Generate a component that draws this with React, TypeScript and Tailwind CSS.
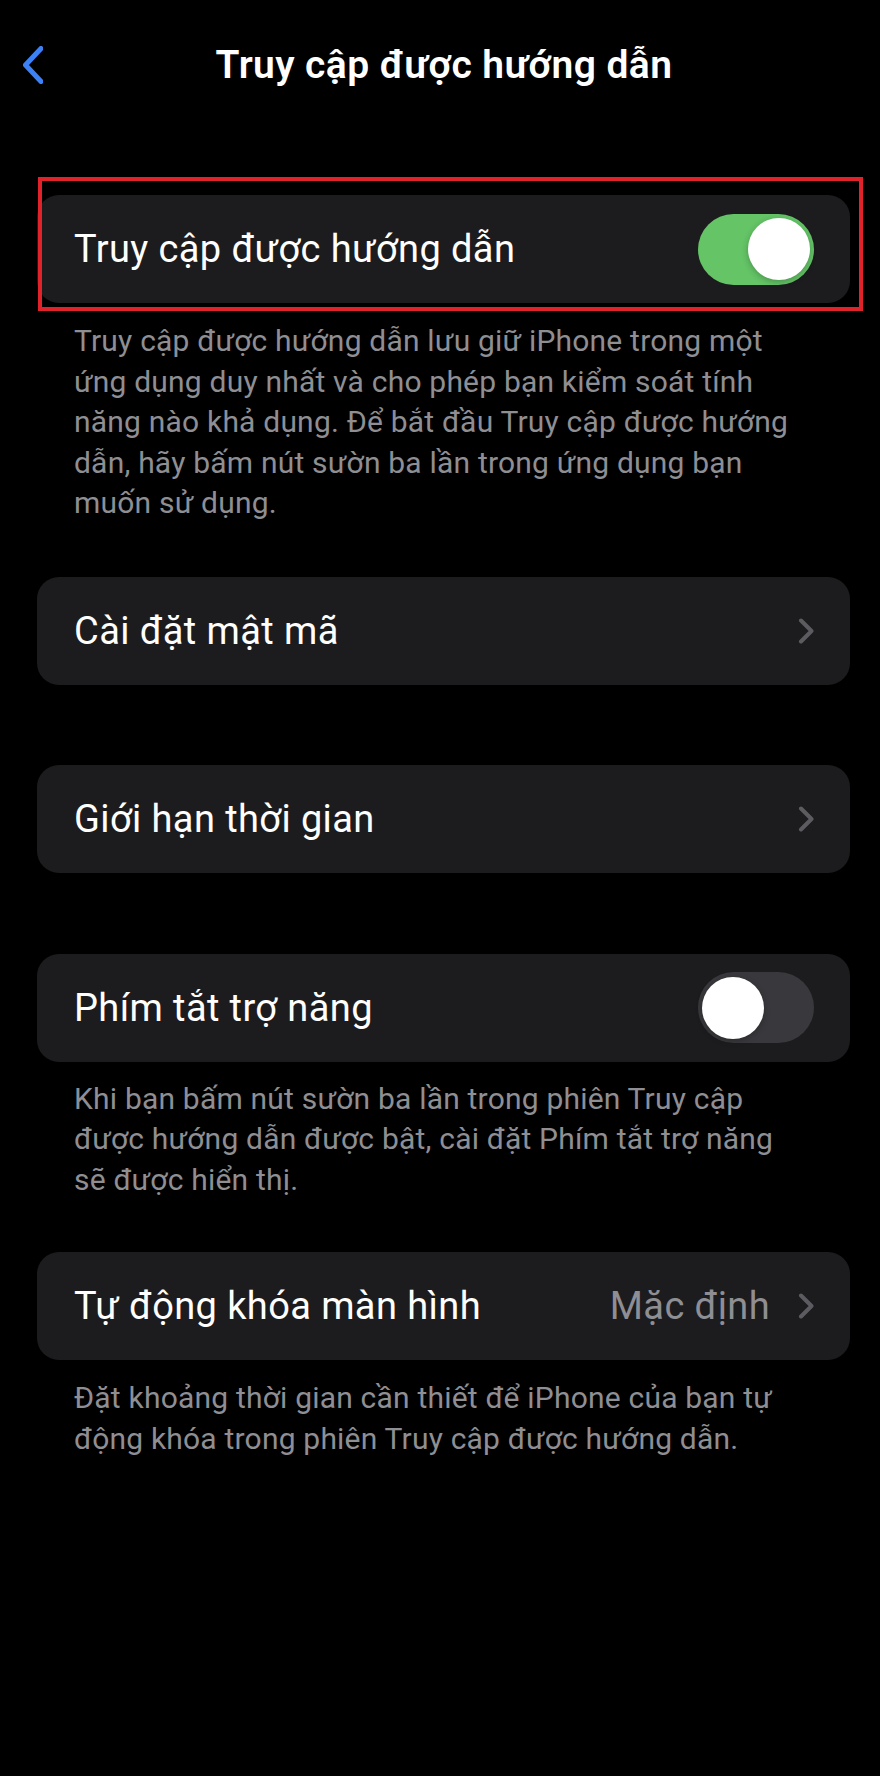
import type { ReactNode } from "react";

const font = { fontFamily: "Roboto, 'Noto Sans', sans-serif" };

function Chevron() {
    return (
        <svg width="16" height="26" viewBox="0 0 16 26" fill="none" className="shrink-0">
            <path d="M3 2.5L13.5 13L3 23.5" stroke="#5b5b60" strokeWidth="4" strokeLinecap="round" strokeLinejoin="round" />
        </svg>
    );
}

function Toggle({ on }: { on: boolean }) {
    return (
        <div
            className={`flex h-[71px] w-[116px] shrink-0 items-center rounded-full p-[4px] ${
                on ? "justify-end bg-[#64c466]" : "justify-start bg-[#39393d]"
            }`}
        >
            <div className="h-[62px] w-[62px] rounded-full bg-white shadow-[0_2px_6px_rgba(0,0,0,0.25)]" />
        </div>
    );
}

function Row({ label, right }: { label: string; right: ReactNode }) {
    return (
        <div className="flex h-[108px] items-center justify-between rounded-[22px] bg-[#1c1c1e] pl-[37px] pr-[36px]">
            <span className="text-[38px] leading-none tracking-[0.4px] text-white">{label}</span>
            {right}
        </div>
    );
}

function Note({ lines }: { lines: string[] }) {
    return (
        <p className="px-[37px] text-[30px] leading-[40.5px] tracking-[0.2px] text-[#8e8e93]">
            {lines.map((l) => (
                <span key={l} className="block whitespace-nowrap">
                    {l}
                </span>
            ))}
        </p>
    );
}

export default function App() {
    return (
        <div className="min-h-screen bg-black" style={font}>
            <header className="grid h-[130px] grid-cols-[1fr_auto_1fr] items-center">
                <div className="pl-[23px]">
                    <svg width="20" height="38" viewBox="0 0 20 38" fill="none">
                        <path d="M18 2.5L2.5 19L18 35.5" stroke="#3c82f6" strokeWidth="5" strokeLinecap="round" strokeLinejoin="round" />
                    </svg>
                </div>
                <h1 className="pl-[8px] text-[39px] font-semibold leading-none tracking-[0.4px] text-white">
                    Truy cập được hướng dẫn
                </h1>
                <div />
            </header>

            <main className="pl-[37px] pr-[30px]">
                <div className="relative mt-[65px]">
                    <Row label="Truy cập được hướng dẫn" right={<Toggle on />} />
                    <div className="pointer-events-none absolute -top-[18px] -right-[13px] -bottom-[8px] left-[1px] border-[4px] border-[#e0232b]" />
                </div>

                <div className="pt-[18px]">
                    <Note
                        lines={[
                            "Truy cập được hướng dẫn lưu giữ iPhone trong một",
                            "ứng dụng duy nhất và cho phép bạn kiểm soát tính",
                            "năng nào khả dụng. Để bắt đầu Truy cập được hướng",
                            "dẫn, hãy bấm nút sườn ba lần trong ứng dụng bạn",
                            "muốn sử dụng.",
                        ]}
                    />
                </div>

                <div className="mt-[53px]">
                    <Row label="Cài đặt mật mã" right={<Chevron />} />
                </div>

                <div className="mt-[80px]">
                    <Row label="Giới hạn thời gian" right={<Chevron />} />
                </div>

                <div className="mt-[81px]">
                    <Row label="Phím tắt trợ năng" right={<Toggle on={false} />} />
                </div>

                <div className="pt-[17px]">
                    <Note
                        lines={[
                            "Khi bạn bấm nút sườn ba lần trong phiên Truy cập",
                            "được hướng dẫn được bật, cài đặt Phím tắt trợ năng",
                            "sẽ được hiển thị.",
                        ]}
                    />
                </div>

                <div className="mt-[52px]">
                    <Row
                        label="Tự động khóa màn hình"
                        right={
                            <div className="flex items-center gap-[28px]">
                                <span className="text-[38px] leading-none tracking-[0.4px] text-[#8e8e93]">Mặc định</span>
                                <Chevron />
                            </div>
                        }
                    />
                </div>

                <div className="pt-[18px]">
                    <Note
                        lines={[
                            "Đặt khoảng thời gian cần thiết để iPhone của bạn tự",
                            "động khóa trong phiên Truy cập được hướng dẫn.",
                        ]}
                    />
                </div>
            </main>
        </div>
    );
}
